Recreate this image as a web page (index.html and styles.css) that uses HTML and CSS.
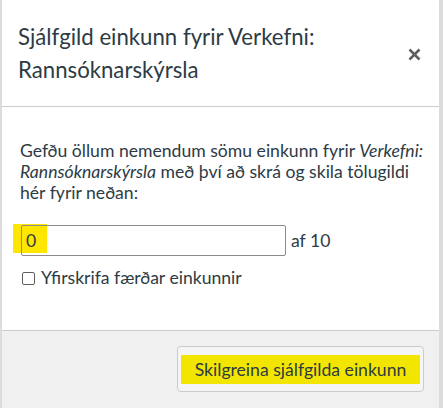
FILE: index.html
```html
<!DOCTYPE html>
<html>
<head>
<meta charset="utf-8">
<link rel="stylesheet" href="styles.css">
</head>
<body>
<div class="dialog">
  <div class="header">
    <h2 class="title">Sjálfgild einkunn fyrir Verkefni:<br>Rannsóknarskýrsla</h2>
    <button class="close" aria-label="Loka">
      <svg width="13" height="13" viewBox="0 0 13 13"><path d="M1.5 1.5 L11.5 11.5 M11.5 1.5 L1.5 11.5" stroke="#5c5f62" stroke-width="2.6" stroke-linecap="butt" fill="none"/></svg>
    </button>
  </div>
  <div class="body">
    <p class="desc">Gefðu öllum nemendum sömu einkunn fyrir <em>Verkefni: Rannsóknarskýrsla</em> með því að skrá og skila tölugildi hér fyrir neðan:</p>
    <div class="grade-row">
      <div class="input-wrap">
        <span class="mark"></span>
        <input class="grade" type="text" value="0">
      </div>
      <span class="out-of">af 10</span>
    </div>
    <label class="check"><span class="box"></span>Yfirskrifa færðar einkunnir</label>
  </div>
  <div class="footer">
    <button class="submit"><span class="submit-mark">Skilgreina sjálfgilda einkunn</span></button>
  </div>
</div>
</body>
</html>
```
FILE: styles.css
```css
html, body {
  margin: 0;
  padding: 0;
}
body {
  background: #dcdcdc;
  font-family: Lato, "Noto Sans", sans-serif;
  color: #2d3b45;
  width: 443px;
  height: 408px;
  overflow: hidden;
}
.dialog {
  margin-left: 2px;
  width: 437px;
  height: 408px;
  background: #fff;
  display: flex;
  flex-direction: column;
}
.header {
  display: flex;
  align-items: center;
  justify-content: space-between;
  padding: 20px 18px 20px 16px;
  border-bottom: 1px solid #c7cdd1;
}
.title {
  margin: 0;
  font-size: 22.2px;
  font-weight: 400;
  line-height: 33px;
  color: #2d3b45;
}
.close {
  border: 0;
  background: none;
  padding: 0;
  width: 13px;
  height: 13px;
  display: flex;
  margin-top: 2px;
}
.body {
  padding: 33px 12px 0 18px;
  flex: 0 0 223px;
  box-sizing: border-box;
}
.desc {
  margin: 0;
  font-size: 17.6px;
  line-height: 21px;
}
.desc em {
  font-style: italic;
}
.grade-row {
  margin-top: 22px;
  display: flex;
  align-items: center;
  gap: 5px;
}
.input-wrap {
  position: relative;
  margin-left: 1px;
}
.mark {
  position: absolute;
  left: -8px;
  top: -1px;
  width: 34px;
  height: 29px;
  background: #ffe600;
}
.grade {
  position: relative;
  display: block;
  width: 265px;
  height: 31px;
  box-sizing: border-box;
  border: 1px solid #8b8b8b;
  border-radius: 2px;
  background: transparent;
  font-family: Lato, "Noto Sans", sans-serif;
  font-size: 17.6px;
  color: #2d3b45;
  padding: 0 0 0 4px;
  margin: 0;
}
.out-of {
  font-size: 17.6px;
}
.check {
  margin-top: 11px;
  display: flex;
  align-items: center;
  font-size: 17.6px;
  line-height: 21px;
}
.box {
  width: 11px;
  height: 11px;
  border: 1px solid #5f5f5f;
  border-radius: 2px;
  margin: 1px 6px 0 2px;
  background: #fff;
}
.footer {
  flex: 1;
  background: #f0f0f0;
  border-top: 1px solid #c7cdd1;
  display: flex;
  justify-content: flex-end;
  align-items: flex-start;
  padding: 15px 15px 0 0;
}
.submit {
  width: 247px;
  height: 46px;
  border: 1px solid #c7cdd1;
  border-radius: 4px;
  background: #f5f5f5;
  padding: 0 3px;
  display: flex;
  align-items: center;
  box-sizing: border-box;
}
.submit-mark {
  display: block;
  width: 100%;
  background: #f2e500;
  font-family: Lato, "Noto Sans", sans-serif;
  font-size: 17.6px;
  line-height: 29px;
  color: #2d3b45;
  text-align: center;
}
```
